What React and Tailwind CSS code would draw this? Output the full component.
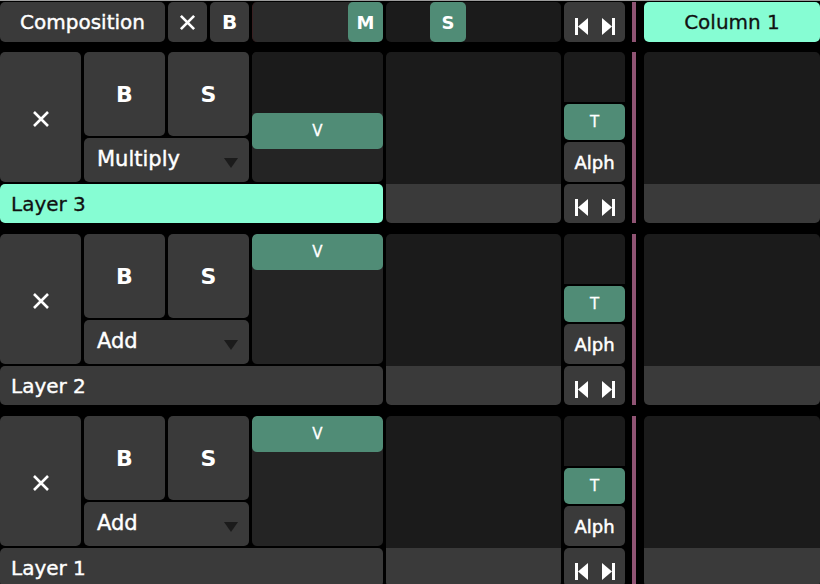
import React from "react";

const FONT = { fontFamily: '"DejaVu Sans", "Liberation Sans", sans-serif' };

function Cross({ size = 18, stroke = 2.6 }) {
    return (
        <svg width={size} height={size} viewBox="0 0 18 18">
            <path d="M2 2 L16 16 M16 2 L2 16" stroke="white" strokeWidth={stroke} strokeLinecap="butt" />
        </svg>
    );
}

function Transport() {
    return (
        <div className="w-[61px] h-full bg-[#3a3a3a] rounded-[5px] flex items-center justify-center pt-2">
            <svg width="40" height="17" viewBox="0 0 40 17">
                <rect x="0" y="0" width="3" height="17" fill="white" />
                <polygon points="3,8.5 13,0 13,17" fill="white" />
                <polygon points="27,0 37,8.5 27,17" fill="white" />
                <rect x="37" y="0" width="3" height="17" fill="white" />
            </svg>
        </div>
    );
}

function Layer({ name, blend, selected, vTop }) {
    return (
        <div className="flex h-[171px] gap-[3px] shrink-0">
            <div className="w-[383px] flex flex-col gap-[2px]">
                <div className="h-[130px] flex gap-[3px]">
                    <div className="w-[81px] bg-[#3a3a3a] rounded-[5px] flex items-center justify-center pt-1">
                        <Cross />
                    </div>
                    <div className="w-[165px] flex flex-col gap-[2px]">
                        <div className="h-[84px] flex gap-[3px]">
                            <div className="w-[81px] bg-[#3a3a3a] rounded-[5px] flex items-center justify-center text-white font-bold text-[22px]">
                                B
                            </div>
                            <div className="w-[81px] bg-[#3a3a3a] rounded-[5px] flex items-center justify-center text-white font-bold text-[22px]">
                                S
                            </div>
                        </div>
                        <div className="h-[44px] bg-[#3a3a3a] rounded-[5px] flex items-center justify-between pl-[13px] pr-[11px]">
                            <span className="text-white text-[21px] leading-none pb-[2px] [-webkit-text-stroke:0.4px_white]">{blend}</span>
                            <svg width="14" height="10" viewBox="0 0 14 10" className="mt-[6px]">
                                <polygon points="0,0 14,0 7,10" fill="#1b1b1b" />
                            </svg>
                        </div>
                    </div>
                    <div className="w-[131px] bg-[#242424] rounded-[5px] flex flex-col overflow-hidden">
                        {!vTop && <div className="h-[61px] bg-[#1b1b1b]"></div>}
                        <div className="h-[36px] bg-[#508c76] rounded-[5px] flex items-center justify-center text-white text-[15px] [-webkit-text-stroke:0.3px_white]">
                            V
                        </div>
                    </div>
                </div>
                <div
                    className={`h-[39px] rounded-[5px] flex items-center pl-[11px] text-[20px] ${selected
                            ? "bg-[#86fdd3] text-[#111] [-webkit-text-stroke:0.3px_#111]"
                            : "bg-[#3a3a3a] text-white [-webkit-text-stroke:0.4px_white]"
                        }`}
                >
                    {name}
                </div>
            </div>
            <div className="w-[175px] rounded-[5px] overflow-hidden flex flex-col">
                <div className="flex-1 bg-[#1b1b1b]"></div>
                <div className="h-[39px] bg-[#3a3a3a]"></div>
            </div>
            <div className="w-[61px] flex flex-col gap-[2px]">
                <div className="h-[50px] bg-[#1b1b1b] rounded-t-[5px]"></div>
                <div className="h-[36px] bg-[#508c76] rounded-[5px] flex items-center justify-center text-white text-[15px] [-webkit-text-stroke:0.3px_white]">
                    T
                </div>
                <div className="h-[40px] bg-[#3a3a3a] rounded-[5px] flex items-center justify-center text-white text-[18px] [-webkit-text-stroke:0.5px_white]">
                    Alph
                </div>
                <div className="h-[39px]">
                    <Transport />
                </div>
            </div>
            <div className="w-[4px] ml-[4px] bg-[#8f5373]"></div>
            <div className="w-[176px] ml-[5px] rounded-[5px] overflow-hidden flex flex-col">
                <div className="flex-1 bg-[#1b1b1b]"></div>
                <div className="h-[39px] bg-[#3a3a3a]"></div>
            </div>
        </div>
    );
}

export default function App() {
    return (
        <div className="w-[820px] h-[584px] bg-black overflow-hidden flex flex-col" style={FONT}>
            <div className="h-px bg-[#9b9b9b] shrink-0"></div>
            <div className="h-[40px] mt-px flex gap-[3px] shrink-0">
                <div className="w-[165px] bg-[#3a3a3a] rounded-[5px] flex items-center justify-center text-white text-[20px] [-webkit-text-stroke:0.4px_white]">
                    Composition
                </div>
                <div className="w-[39px] bg-[#3a3a3a] rounded-[5px] flex items-center justify-center">
                    <Cross size={17} stroke={2.8} />
                </div>
                <div className="w-[39px] bg-[#3a3a3a] rounded-[5px] flex items-center justify-center text-white font-bold text-[20px]">
                    B
                </div>
                <div className="w-[131px] bg-[#2a2a2a] rounded-[5px] border-l border-[#3a2022] flex justify-end">
                    <div className="w-[35px] bg-[#508c76] rounded-[5px] flex items-center justify-center text-white font-bold text-[18px]">
                        M
                    </div>
                </div>
                <div className="w-[175px] bg-[#1b1b1b] rounded-[5px] flex pl-[44px]">
                    <div className="w-[36px] bg-[#508c76] rounded-[5px] flex items-center justify-center text-white font-bold text-[18px]">
                        S
                    </div>
                </div>
                <Transport />
                <div className="w-[4px] ml-[4px] bg-[#8f5373]"></div>
                <div className="w-[176px] ml-[5px] bg-[#86fdd3] rounded-[5px] flex items-center justify-center text-[#111] text-[20px] [-webkit-text-stroke:0.3px_#111]">
                    Column 1
                </div>
            </div>
            <div className="flex flex-col gap-[11px] mt-[10px]">
                <Layer name="Layer 3" blend="Multiply" selected />
                <Layer name="Layer 2" blend="Add" vTop />
                <Layer name="Layer 1" blend="Add" vTop />
            </div>
        </div>
    );
}
